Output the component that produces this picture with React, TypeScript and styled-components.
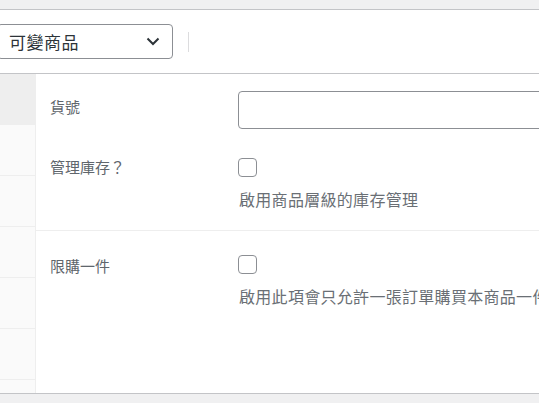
import React from "react";
import styled, { createGlobalStyle } from "styled-components";

const GlobalStyle = createGlobalStyle`
  html, body {
    margin: 0;
    padding: 0;
    background: #f0f0f1;
  }
  body {
    font-family: "Noto Sans CJK TC", "Noto Sans", sans-serif;
  }
`;

const Page = styled.div`
  width: 539px;
  height: 403px;
  overflow: hidden;
  background: #f0f0f1;
  display: flex;
  flex-direction: column;
`;

const TopBand = styled.div`
  height: 9px;
  flex-shrink: 0;
`;

const Panel = styled.div`
  background: #fff;
  border-top: 1px solid #c3c4c7;
  border-bottom: 1px solid #c3c4c7;
  display: flex;
  flex-direction: column;
  width: 700px;
`;

const Header = styled.div`
  height: 63px;
  display: flex;
  align-items: center;
  border-bottom: 1px solid #c3c4c7;
`;

const Select = styled.div`
  margin-left: -3px;
  width: 176px;
  height: 35px;
  box-sizing: border-box;
  border: 1px solid #8c8f94;
  border-radius: 4px;
  display: flex;
  align-items: center;
  justify-content: space-between;
  padding: 0 12px 0 11px;
  font-size: 17px;
  letter-spacing: 0.5px;
  color: #2c3338;
`;

const Divider = styled.div`
  width: 1px;
  height: 20px;
  background: #dcdcde;
  margin-left: 15px;
`;

const Body = styled.div`
  display: flex;
  height: 319px;
`;

const Tabs = styled.ul`
  list-style: none;
  margin: 0;
  padding: 0;
  width: 35px;
  flex-shrink: 0;
  background: #fafafa;
  border-right: 1px solid #eee;
`;

const Tab = styled.li<{ $active?: boolean }>`
  height: 50px;
  border-bottom: 1px solid #eee;
  background: ${(p) => (p.$active ? "#eee" : "#fafafa")};
`;

const Fields = styled.div`
  flex: 1;
  display: flex;
  flex-direction: column;
`;

const Section = styled.div<{ $divider?: boolean }>`
  display: flex;
  flex-direction: column;
  border-bottom: ${(p) => (p.$divider ? "1px solid #eee" : "none")};
`;

const Row = styled.div<{ $top: number; $bottom?: number }>`
  display: grid;
  grid-template-columns: 188px 1fr;
  padding: ${(p) => p.$top}px 0 ${(p) => p.$bottom ?? 0}px 14px;
`;

const Label = styled.label<{ $top: number }>`
  font-size: 15px;
  line-height: 20px;
  color: #60666c;
  margin-top: ${(p) => p.$top}px;
`;

const Control = styled.div`
  display: flex;
  flex-direction: column;
  align-items: flex-start;
`;

const TextInput = styled.div`
  width: 420px;
  height: 38px;
  box-sizing: border-box;
  border: 1px solid #8c8f94;
  border-radius: 4px;
  background: #fff;
`;

const Checkbox = styled.span`
  display: block;
  width: 19px;
  height: 19px;
  box-sizing: border-box;
  border: 1px solid #8c8f94;
  border-radius: 4px;
  background: #fff;
`;

const Description = styled.span`
  margin-top: 11px;
  font-size: 16px;
  line-height: 22px;
  letter-spacing: 0.3px;
  color: #6a6f75;
  white-space: nowrap;
  margin-left: 1px;
`;

const Chevron = () => (
  <svg width="14" height="9" viewBox="0 0 14 9" fill="none">
    <path d="M1.5 1.5 L7 7 L12.5 1.5" stroke="#2c3338" strokeWidth="2" />
  </svg>
);

export default function App() {
  return (
    <>
      <GlobalStyle />
      <Page>
        <TopBand />
        <Panel>
          <Header>
            <Select>
              <span>可變商品</span>
              <Chevron />
            </Select>
            <Divider />
          </Header>
          <Body>
            <Tabs>
              <Tab $active />
              <Tab />
              <Tab />
              <Tab />
              <Tab />
              <Tab />
            </Tabs>
            <Fields>
              <Section $divider>
                <Row $top={17}>
                  <Label $top={6}>貨號</Label>
                  <Control>
                    <TextInput />
                  </Control>
                </Row>
                <Row $top={29} $bottom={20}>
                  <Label $top={-1}>管理庫存？</Label>
                  <Control>
                    <Checkbox />
                    <Description>啟用商品層級的庫存管理</Description>
                  </Control>
                </Row>
              </Section>
              <Section>
                <Row $top={24}>
                  <Label $top={1}>限購一件</Label>
                  <Control>
                    <Checkbox />
                    <Description>啟用此項會只允許一張訂單購買本商品一件</Description>
                  </Control>
                </Row>
              </Section>
            </Fields>
          </Body>
        </Panel>
      </Page>
    </>
  );
}
